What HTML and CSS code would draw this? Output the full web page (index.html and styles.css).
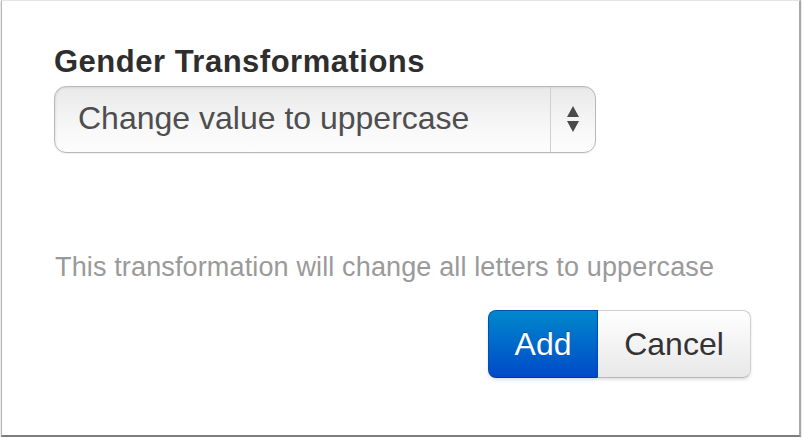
FILE: index.html
```html
<!DOCTYPE html>
<html>
<head>
<meta charset="utf-8">
<link rel="stylesheet" href="styles.css">
</head>
<body>
<div class="frame">
  <label class="title">Gender Transformations</label>
  <div class="select">
    <span class="select-value">Change value to uppercase</span>
    <span class="select-arrows">
      <svg width="14" height="28" viewBox="0 0 14 28"><path d="M7 1 L13 12 L1 12 Z" fill="#4a4a4a"/><path d="M1 16 L13 16 L7 27 Z" fill="#4a4a4a"/></svg>
    </span>
  </div>
  <p class="help">This transformation will change all letters to uppercase</p>
  <div class="actions">
    <button class="btn btn-primary">Add</button>
    <button class="btn btn-default">Cancel</button>
  </div>
</div>
</body>
</html>
```
FILE: styles.css
```css
html, body {
  margin: 0;
  padding: 0;
  background: #ffffff;
}
body {
  font-family: "Liberation Sans", Arial, sans-serif;
}
.frame {
  box-sizing: border-box;
  width: 800px;
  height: 437px;
  margin-left: 1px;
  padding: 44px 48px 0 52px;
  background: #fff;
  border-top: 1px solid #e4e4e4;
  border-left: 1px solid #b4b4b4;
  border-right: 2px solid #a8a8a8;
  border-bottom: 2px solid #7d7d7d;
  box-shadow: 0 1px 2px rgba(0,0,0,0.25);
  display: flex;
  flex-direction: column;
}
.title {
  display: block;
  font-weight: bold;
  font-size: 31px;
  letter-spacing: 0.5px;
  line-height: 36px;
  color: #2e2e2e;
  margin-top: -1px;
}
.select {
  box-sizing: border-box;
  margin-top: 6px;
  width: 542px;
  height: 67px;
  border: 1px solid #b9b9b9;
  border-radius: 12px;
  background: linear-gradient(#e9e9e9, #f9f9f9 70%, #fdfdfd);
  box-shadow: inset 1px 1px 2px rgba(0,0,0,0.08), 0 1px 1px rgba(0,0,0,0.06);
  display: flex;
  align-items: stretch;
}
.select-value {
  flex: 1;
  padding-left: 23px;
  font-size: 32px;
  line-height: 62px;
  padding-bottom: 3px;
  color: #4e4e4e;
  border-right: 1px solid #cfcfcf;
}
.select-arrows {
  width: 44px;
  display: flex;
  align-items: center;
  justify-content: center;
}
.select-arrows svg {
  display: block;
  margin-top: -1px;
}
.help {
  margin: 98px 0 0 1px;
  font-size: 27px;
  letter-spacing: 0.14px;
  line-height: 32px;
  color: #9a9a9a;
}
.actions {
  margin-top: 27px;
  display: flex;
  justify-content: flex-end;
}
.btn {
  font-family: "Liberation Sans", Arial, sans-serif;
  font-size: 32px;
  height: 68px;
  margin: 0;
  cursor: pointer;
  box-shadow: 0 2px 3px rgba(0,0,0,0.12);
}
.btn-primary {
  width: 110px;
  color: #fff;
  background: linear-gradient(#0088cc, #0049c8);
  border: 1px solid #0050b8;
  border-bottom-color: #003a8c;
  border-radius: 8px 0 0 8px;
  text-shadow: 0 -1px 0 rgba(0,0,0,0.25);
}
.btn-default {
  width: 153px;
  color: #333;
  background: linear-gradient(#ffffff, #e8e8e8);
  border: 1px solid #d0d0d0;
  border-left: none;
  border-bottom-color: #b8b8b8;
  border-radius: 0 8px 8px 0;
}
```
